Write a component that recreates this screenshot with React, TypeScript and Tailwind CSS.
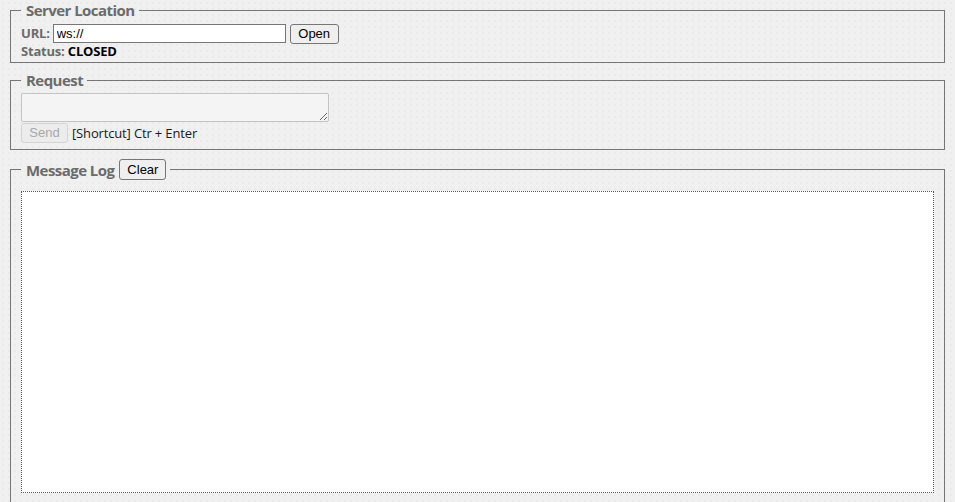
import React, { useState } from 'react';

const legendCls =
  "px-[4px] text-[15px] leading-[20px] font-bold text-[#6b6b6b] font-['Open_Sans',sans-serif] tracking-[-0.55px]";
const labelCls = "font-bold text-[#6b6b6b] font-['Open_Sans',sans-serif] text-[13px] tracking-[-0.2px]";
const btnCls =
  "h-[20px] px-[6px] border border-[#767676] rounded-[3px] bg-[#efefef] text-[13px] leading-[18px] text-black font-['Liberation_Sans',Arial,sans-serif]";

const App: React.FC = () => {
  const [url, setUrl] = useState('ws://');

  return (
    <div className="min-h-[502px] bg-[#f0f0f0] bg-[radial-gradient(#eaeaea_1px,transparent_1px)] bg-[size:6px_6px] px-[10px]">
      <fieldset className="border border-[#767676] px-[10px] pt-[3px] pb-[4px] mb-[7px]">
        <legend className={legendCls + ' pl-[5px]'}>Server Location</legend>
        <div className="flex items-center h-[21px]">
          <span className={labelCls + ' mr-[3px]'}>URL:</span>
          <input
            value={url}
            onChange={(e) => setUrl(e.target.value)}
            className="w-[233px] h-[19px] border border-[#767676] bg-white px-[3px] text-[13px] text-black font-['Liberation_Sans',Arial,sans-serif] outline-none"
          />
          <button className={btnCls + ' ml-[4px] w-[49px]'}>Open</button>
        </div>
        <div className="h-[14px] leading-[14px] text-[13px]">
          <span className={labelCls}>Status: </span>
          <span className="font-bold text-black font-['Open_Sans',sans-serif] tracking-[-0.2px]">CLOSED</span>
        </div>
      </fieldset>

      <fieldset className="border border-[#767676] px-[10px] pt-[3px] pb-[5px] mb-[9px]">
        <legend className={legendCls + ' pl-[5px]'}>Request</legend>
        <textarea
          disabled
          className="block w-[308px] h-[29px] border border-[#c4c4c4] bg-[#f4f4f4] rounded-[2px] resize"
        />
        <div className="flex items-center mt-[1px]">
          <button
            disabled
            className="h-[20px] w-[47px] border border-[#d4d4d4] rounded-[3px] bg-[#ececec] text-[13px] leading-[18px] text-[#a8a8a8] font-['Liberation_Sans',Arial,sans-serif]"
          >
            Send
          </button>
          <span className="ml-[4px] text-[13px] text-[#1a1a1a] font-['Open_Sans',sans-serif] tracking-[-0.15px] mt-[1px]">
            [Shortcut] Ctr + Enter
          </span>
        </div>
      </fieldset>

      <fieldset className="border border-[#767676] px-[10px] pt-[10px] pb-[10px]">
        <legend className={legendCls + ' pl-[5px] flex items-center h-[22px]'}>
          <span>Message Log</span>
          <button className={btnCls + ' ml-[5px] w-[47px] h-[21px] tracking-normal font-normal'}>Clear</button>
        </legend>
        <div className="h-[302px] border border-dotted border-[#555] bg-white" />
      </fieldset>
    </div>
  );
};

export default App;
